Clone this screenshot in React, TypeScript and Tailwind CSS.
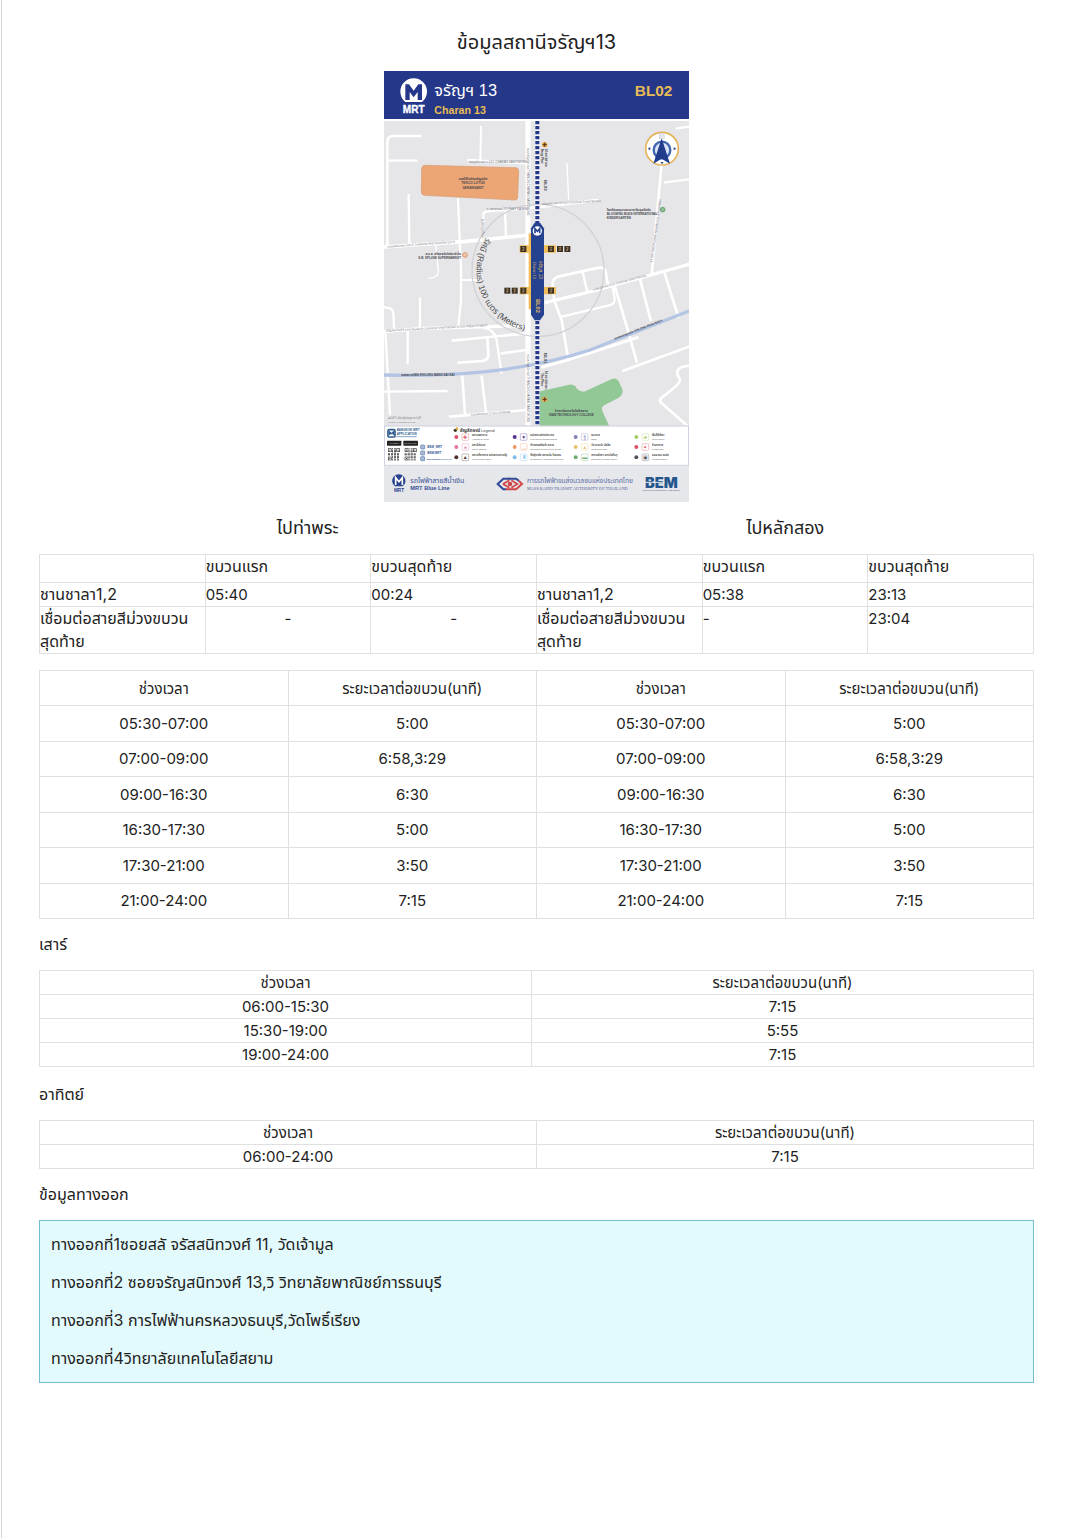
type Row = [string, string];

const weekday: Row[] = [
  ["05:30-07:00", "5:00"],
  ["07:00-09:00", "6:58,3:29"],
  ["09:00-16:30", "6:30"],
  ["16:30-17:30", "5:00"],
  ["17:30-21:00", "3:50"],
  ["21:00-24:00", "7:15"],
];

const saturday: Row[] = [
  ["06:00-15:30", "7:15"],
  ["15:30-19:00", "5:55"],
  ["19:00-24:00", "7:15"],
];

const sunday: Row[] = [["06:00-24:00", "7:15"]];

const exits = [
  "ทางออกที่1ซอยสลั จรัสสนิทวงศ์ 11, วัดเจ้ามูล",
  "ทางออกที่2 ซอยจรัญสนิทวงศ์ 13,วิ วิทยาลัยพาณิชย์การธนบุรี",
  "ทางออกที่3 การไฟฟ้านครหลวงธนบุรี,วัดโพธิ์เรียง",
  "ทางออกที่4วิทยาลัยเทคโนโลยีสยาม",
];

const PERIOD = "ช่วงเวลา";
const INTERVAL = "ระยะเวลาต่อขบวน(นาที)";

const roads: [string, number][] = [
  ["M108 195H28Q10 195 10 214V522", 8],
  ["M10 269H98", 7],
  ["M291 167L289 268", 6],
  ["M253 267L432 278", 7],
  ["M74 372L76 520", 7],
  ["M549 277L554 385", 4],
  ["M833 275L803 612", 8],
  ["M878 172L915 167M843 334L915 325", 7],
  ["M440 410L640 388", 9],
  ["M0 528L238 512L438 492", 11],
  ["M298 507V432Q298 422 308 421L428 412M363 422L366 497", 7],
  ["M222 385L231 600V690L223 765", 7],
  ["M155 522L163 600Q164 620 133 622", 4],
  ["M231 627H293", 6],
  ["M0 709Q26 709 28 725L30 772M108 682V768", 7],
  ["M0 782L118 772L428 764", 10],
  ["M206 809L428 787", 8],
  ["M298 770Q332 775 338 808L352 905", 7],
  ["M4 782L18 1030M71 782V877", 7],
  ["M310 800L313 850Q314 868 294 870L223 875M353 847L428 837", 8],
  ["M0 962L188 960", 7],
  ["M235 917L243 1029M293 917L306 1022", 8],
  ["M198 1037L428 1017", 8],
  ["M486 694L628 660L800 612L915 580", 10],
  ["M510 682L506 640Q505 622 522 617L645 590Q662 588 665 602L672 642", 8],
  ["M596 604L610 662", 7],
  ["M511 690L533 748L553 867", 8],
  ["M533 737L675 703Q694 698 692 684L686 650", 7],
  ["M693 648L738 800L758 872", 8],
  ["M768 624L800 747M841 604L883 738", 8],
  ["M475 888L548 868L760 800", 9],
  ["M718 899L915 827", 8],
  ["M915 884Q876 888 880 908L888 928Q888 940 830 982L828 992L910 1064", 8],
  ["M432 150V1064", 15],
];

const legend: { x: number; y: number; color: string; glyph: string; th: string; en: string }[] = [
  { x: 217, y: 1098, color: "#dd5065", glyph: "✚", th: "สถานพยาบาล", en: "Hospital & Clinic" },
  { x: 217, y: 1128, color: "#e577a6", glyph: "●", th: "สถานีตำรวจ", en: "Police Station" },
  { x: 217, y: 1159, color: "#4b332f", glyph: "▲", th: "สถานที่ราชการ หน่วยงานภาครัฐ", en: "Government Office" },
  { x: 392, y: 1098, color: "#55308c", glyph: "▼", th: "หน่วยงานต่างประเทศ", en: "Foreign/Intl Organizations" },
  { x: 392, y: 1128, color: "#ec9a68", glyph: "◡", th: "ห้างสรรพสินค้า ตลาด", en: "Shopping Center/Food Center" },
  { x: 392, y: 1159, color: "#80bce8", glyph: "♜", th: "ที่อยู่อาศัย สถานบัน โรงแรม", en: "Residential, Condominium/Hotel" },
  { x: 575, y: 1098, color: "#8680bd", glyph: "§", th: "ธนาคาร", en: "Bank" },
  { x: 575, y: 1128, color: "#e6c667", glyph: "▲", th: "วัด ศาลเจ้า มัสยิด", en: "Religious Place" },
  { x: 575, y: 1159, color: "#6cad70", glyph: "▬", th: "สถานศึกษา สถาบันอื่นๆ", en: "Education & Other Sport" },
  { x: 757, y: 1098, color: "#a8cf63", glyph: "♣", th: "พื้นที่สีเขียว", en: "Green Zone" },
  { x: 757, y: 1128, color: "#dd5065", glyph: "✦", th: "ร้านอาหาร", en: "Restaurant" },
  { x: 757, y: 1159, color: "#56565e", glyph: "▣", th: "คมนาคม ขนส่ง", en: "Transportation" },
];

const facilities: [number, number][] = [
  [418, 534], [501, 534], [528, 534], [550, 534],
  [370, 659], [392, 659], [418, 659], [501, 659],
];

function QrCode({ x, y }: { x: number; y: number }) {
  const cells: [number, number][] = [];
  for (let r = 0; r < 12; r++)
    for (let c = 0; c < 12; c++) {
      const corner = (r < 4 && c < 4) || (r < 4 && c > 7) || (r > 7 && c < 4);
      if (!corner && (r * 7 + c * 5 + r * c) % 3 !== 1) cells.push([r, c]);
    }
  return (
    <g transform={`translate(${x} ${y})`} fill="#333">
      {cells.map(([r, c]) => (
        <rect key={`${r}-${c}`} x={c * 3} y={r * 3} width="3" height="3" />
      ))}
      {[[0, 0], [25, 0], [0, 25]].map(([cx, cy]) => (
        <g key={`${cx}-${cy}`}>
          <rect x={cx + 1} y={cy + 1} width="9" height="9" fill="none" stroke="#333" strokeWidth="2" />
          <rect x={cx + 4} y={cy + 4} width="3" height="3" />
        </g>
      ))}
    </g>
  );
}

function StationMap() {
  return (
    <svg
      viewBox="0 0 915 1293"
      className="block w-[305px] max-w-full"
      role="img"
      aria-label="จรัญฯ 13 Charan 13 BL02"
      fontFamily='"Liberation Sans", "Noto Sans Thai", sans-serif'
    >
      <rect width="915" height="1293" fill="#fff" />
      <rect width="915" height="144" fill="#243788" />
      <path d="M64 93A40 40 0 1 1 114 93Z" fill="#fff" />
      <path d="M64 87V40H75L89 59L103 40H114V87H101V63L89 79L77 63V87Z" fill="#243788" />
      <text x="89" y="126" fontSize="30" fontWeight="700" fill="#fff" stroke="#fff" strokeWidth="1" textAnchor="middle">MRT</text>
      <text x="151" y="75" fontSize="49" fill="#fff">จรัญฯ 13</text>
      <text x="151" y="128" fontSize="32" fontWeight="700" fill="#e9bb55">Charan 13</text>
      <text x="865" y="76" fontSize="46" fontWeight="700" fill="#e9bb55" textAnchor="end">BL02</text>

      <rect y="150" width="915" height="914" fill="#e6e6e8" />
      <clipPath id="map-area">
        <rect y="150" width="915" height="914" />
      </clipPath>
      <g clipPath="url(#map-area)">
        <g fill="none" stroke="#fff" strokeLinejoin="round" strokeLinecap="round">
          {roads.map(([d, w]) => (
            <path key={d} d={d} strokeWidth={w} />
          ))}
        </g>
        <path d="M0 912C190 916 400 908 618 837L915 720" fill="none" stroke="#b4c5e4" strokeWidth="10" />
        <path d="M124 283L396 290Q404 291 404 300L401 380Q400 388 392 387L122 373Q112 372 112 362L113 293Q114 283 124 283Z" fill="#eca676" stroke="#d99a70" strokeWidth="2" />
        <path d="M463 962L552 942Q566 938 574 946Q582 962 600 962L682 925Q696 918 704 930L716 958Q716 974 704 980L658 1004Q650 1012 656 1022L676 1066H463Z" fill="#92c796" />
        <circle cx="462" cy="598" r="198" fill="none" stroke="#d2d2d6" strokeWidth="4" />
        <path d="M460 150V1064" stroke="#f4f5fa" strokeWidth="14" />
        <path d="M460 150V1064" stroke="#243788" strokeWidth="12" strokeDasharray="10 5" />

        <rect x="434" y="487" width="20" height="228" fill="#f0bd58" />
        <path d="M407 523H516V545H407ZM407 648H516V670H407Z" fill="#f0bd58" />
        <path d="M452 455H468L480 472V731L468 748H452L441 731V472Z" fill="#24428f" />
        <circle cx="460" cy="480" r="14" fill="#fff" />
        <path d="M453 487V473L460 481L467 473V487" fill="none" stroke="#24428f" strokeWidth="5" />
        {facilities.map(([x, y]) => (
          <g key={`${x}-${y}`}>
            <rect x={x - 9} y={y - 9} width="18" height="18" fill="#3b3024" />
            <path d={`M${x - 4} ${y - 5}H${x + 4}M${x} ${y - 5}V${y + 6}M${x - 4} ${y + 5}L${x + 4} ${y}`} stroke="#b99a68" strokeWidth="2" />
          </g>
        ))}
        <g fill="#e4bc62">
          <text transform="translate(464 570) rotate(90)" fontSize="14">จรัญฯ 13</text>
          <text transform="translate(448 572) rotate(90)" fontSize="11">Charan 13</text>
          <text transform="translate(455 684) rotate(90)" fontSize="17" fontWeight="700">BL02</text>
        </g>

        <path id="radius-arc" d="M306 500A184 184 0 0 0 450 782" fill="none" />
        <text fontSize="25" fill="#4a4a4a">
          <textPath href="#radius-arc">รัศมี (Radius) 100 เมตร (Meters)</textPath>
        </text>

        <g fill="#4a4a52">
          <g fontSize="10" fontWeight="700" textAnchor="middle">
            <text x="267" y="326">เทสโก้โลตัสจรัญสนิท</text>
            <text x="267" y="339">TESCO LOTUS</text>
            <text x="267" y="353">JARANSANIT</text>
            <text x="562" y="1022">วิทยาลัยเทคโนโลยีสยาม</text>
            <text x="562" y="1036" fontSize="9">SIAM TECHNOLOGY COLLEGE</text>
          </g>
          <g fontSize="9" fontWeight="700">
            <text x="668" y="420">โรงเรียนอนุบาลนานาชาติบลูมมิ่งบัด</text>
            <text x="668" y="431">BLOOMING BUDS INTERNATIONAL</text>
            <text x="668" y="443">KINDERGARTEN</text>
            <text x="231" y="552" textAnchor="end">ส.บ.ส. ศรีสุขซุปเปอร์มาร์เก็ต</text>
            <text x="231" y="563" textAnchor="end">S.B. SPLUSE SUPERMARKET</text>
            <text x="52" y="914">คลองบางไส้ไก่ KHLONG BANG SAI KAI</text>
            <text transform="translate(692 806) rotate(-21)">คลองมอญเหนือ KHLONG MON NUEA</text>
          </g>
          <g fontSize="9" fill="#777780">
            <text x="255" y="275">จรัญสนิทวงศ์ ซ.10/1 CHARAN SANITWONG</text>
            <text x="308" y="418">ซ. เพชรเกษม 2/1 PHET KASEM</text>
            <text transform="translate(474 402) rotate(-3)">จรัญสนิทวงศ์ 13 SOI CHARAN SANITWONG</text>
            <text transform="translate(10 530) rotate(-4)">ถนนเพชรเกษม ซอย 5 THANON PHETKASEM SOI 5</text>
            <text transform="translate(628 659) rotate(-15)">จรัญสนิทวงศ์ ซ.11 CHARAN SANITWONG</text>
            <text transform="translate(5 782) rotate(-3)">จรัญสนิทวงศ์ 8 ซอยเปรมสมบัติ CHARAN SANITWONG 8 SOI PREM SOMBAT</text>
            <text transform="translate(260 1034) rotate(-4)">ถนนเพชรเกษม 2 SOI CHARAN</text>
            <text transform="translate(429 230) rotate(90)">ถนนจรัญสนิทวงศ์ THANON CHARAN SANITWONG</text>
            <text transform="translate(429 850) rotate(90)">ถนนจรัญสนิทวงศ์ THANON CHARAN SANITWONG</text>
            <text transform="translate(826 385) rotate(98)">จรัญสนิทวงศ์ 13 CHARAN SANITWONG SOI 13</text>
            <text transform="translate(301 500) rotate(-90)">จรัญสนิทวงศ์ 8</text>
            <text x="12" y="1045" fontSize="8">ฉบับที่ 1 ปรับปรุงข้อมูล ณ วันที่</text>
            <text x="12" y="1055" fontSize="7">Version 1 Updated on Map</text>
          </g>
          <g fontSize="9" fontWeight="700">
            <text transform="translate(483 233) rotate(90)">ไป สถานีท่าพระ</text>
            <text transform="translate(471 233) rotate(90)">Bang Phai</text>
            <text transform="translate(479 327) rotate(90)" fontSize="13">BL03</text>
            <text transform="translate(479 846) rotate(90)" fontSize="13">BL01</text>
            <text transform="translate(484 900) rotate(90)">ไป สถานีท่าพระ</text>
            <text transform="translate(472 906) rotate(90)">Tha Phra</text>
          </g>
        </g>
        {[221, 985].map((y) => (
          <g key={y}>
            <circle cx="482" cy={y} r="8" fill="#e6a13f" />
            <path d={`M476 ${y}H488M482 ${y - 6}V${y + 6}`} stroke="#4b3422" strokeWidth="3" />
          </g>
        ))}
        <g strokeWidth="3">
          <circle cx="836" cy="416" r="7" fill="#8abc91" stroke="#6da577" />
          <circle cx="243" cy="552" r="7" fill="#f2c4ad" stroke="#df936b" />
        </g>

        <circle cx="834" cy="233" r="49" fill="#fff" stroke="#e4b358" strokeWidth="5" />
        <circle cx="834" cy="237" r="25" fill="#dbe4f5" stroke="#3f66ae" strokeWidth="7" />
        <path d="M833 202L858 278L833 263L808 278Z" fill="#213c8b" />
        <path d="M791 233L799 228V238ZM877 233L869 228V238ZM834 280L829 273H839Z" fill="#344d8c" />
        <rect x="825" y="186" width="17" height="18" fill="#d8d8dc" />
        <text x="834" y="200" fontSize="15" fill="#fff" textAnchor="middle">N</text>
      </g>

      <rect x="1" y="1065" width="913" height="118" fill="#fff" stroke="#c9c9dc" strokeWidth="3" />
      <rect x="12" y="1076" width="21" height="22" rx="4" fill="#fff" stroke="#2d5b8c" strokeWidth="5" />
      <path d="M17 1092V1083L22 1088L28 1083V1092" fill="none" stroke="#2d5b8c" strokeWidth="4" />
      <text x="38" y="1081" fontSize="9" fontWeight="700" fill="#2d5b8c">BANGKOK MRT</text>
      <text x="38" y="1092" fontSize="9" fontWeight="700" fill="#2d5b8c">APPLICATION</text>
      <path d="M37 1097H98" stroke="#80a7ca" strokeWidth="3" />
      <rect x="9" y="1109" width="43" height="15" rx="2" fill="#222" />
      <rect x="58" y="1109" width="44" height="15" rx="2" fill="#222" />
      <text x="30" y="1119" fontSize="7" fill="#ccc" textAnchor="middle">App Store</text>
      <text x="80" y="1119" fontSize="7" fill="#ccc" textAnchor="middle">Google Play</text>
      <QrCode x={12} y={1132} />
      <QrCode x={62} y={1132} />
      {[1122, 1140, 1157].map((y) => (
        <rect key={y} x="110" y={y} width="12" height="12" rx="2" fill="#a9bcd8" stroke="#5a7aaa" strokeWidth="2" />
      ))}
      <g fontSize="9" fontWeight="700" fill="#335798">
        <text x="130" y="1131">BEM_MRT</text>
        <text x="130" y="1149">BEM.MRT</text>
        <text x="128" y="1166" fontSize="7">WWW.BEMPLC.CO.TH</text>
      </g>
      <circle cx="214" cy="1078" r="5" fill="#40362b" />
      <circle cx="219" cy="1073" r="4" fill="#e0ad3c" />
      <text x="227" y="1082" fontSize="14" fill="#444">
        <tspan fontWeight="700">สัญลักษณ์</tspan>
        <tspan dx="3" fontSize="12">Legend</tspan>
      </text>
      {legend.map(({ x, y, color, glyph, th, en }) => (
        <g key={`${x}-${y}`}>
          <circle cx={x} cy={y} r="6" fill={color} />
          <rect x={x + 17} y={y - 10} width="20" height="20" rx="3" fill="#fff" stroke={color} strokeWidth="1" />
          <text x={x + 27} y={y + 5} fontSize="15" fill={color} textAnchor="middle">{glyph}</text>
          <text x={x + 47} y={y - 3} fontSize="8" fontWeight="700" fill="#555">{th}</text>
          <text x={x + 47} y={y + 8} fontSize="7" fill="#555">{en}</text>
        </g>
      ))}

      <rect y="1184" width="915" height="109" fill="#e5e7eb" />
      <path d="M33 1246A20 20 0 1 1 56 1246Z" fill="#294290" />
      <path d="M35 1242V1220L45 1232L55 1220V1242" fill="none" stroke="#fff" strokeWidth="5" />
      <text x="45" y="1262" fontSize="14" fontWeight="700" fill="#294290" textAnchor="middle">MRT</text>
      <text x="79" y="1236" fontSize="21" fill="#3b5196">รถไฟฟ้าสายสีน้ำเงิน</text>
      <text x="79" y="1258" fontSize="17" fontWeight="700" fill="#3b5196">MRT Blue Line</text>
      <g fill="none" strokeWidth="6">
        <path d="M376 1223H358L341 1239L358 1255H366" stroke="#304997" />
        <path d="M366 1255H396L414 1239L404 1229" stroke="#cf4548" />
        <path d="M372 1223H396L404 1229" stroke="#304997" />
        <path d="M357 1239L376 1228M357 1239L376 1250" stroke="#cf4548" strokeWidth="5" />
        <path d="M382 1228L400 1239L382 1250" stroke="#cf4548" strokeWidth="5" />
      </g>
      <circle cx="378" cy="1239" r="7" fill="#cf4548" />
      <text x="429" y="1235" fontSize="20" fill="#5b6ba3">การรถไฟฟ้าขนส่งมวลชนแห่งประเทศไทย</text>
      <text x="429" y="1258" fontSize="13" fill="#506199" fontFamily='"Liberation Serif", serif'>MASS RAPID TRANSIT AUTHORITY OF THAILAND</text>
      <text x="832" y="1250" fontSize="44" fontWeight="900" fill="#24558d" textAnchor="middle" fontFamily="Inter, sans-serif">BEM</text>
      <path d="M773 1234H842" stroke="#e5e7eb" strokeWidth="3" />
      <text x="832" y="1260" fontSize="6" fontWeight="700" fill="#647b9b" textAnchor="middle">BANGKOK EXPRESSWAY AND METRO</text>
    </svg>
  );
}

function Intervals({ rows, split, firstCol }: { rows: Row[]; split?: boolean; firstCol: string }) {
  const cell = `${split ? "h-[35px]" : "h-6"} border border-[#e0e0e0] p-0 text-center font-normal`;
  const halves = split ? [0, 1] : [0];
  return (
    <table className={`w-full table-fixed border-collapse ${split ? "h-[249px]" : ""}`}>
      <thead>
        <tr>
          {halves.map((h) => [
            <th key={`p${h}`} scope="col" className={`${cell} ${firstCol}`}>{PERIOD}</th>,
            <th key={`i${h}`} scope="col" className={cell}>{INTERVAL}</th>,
          ])}
        </tr>
      </thead>
      <tbody>
        {rows.map(([time, gap]) => (
          <tr key={time}>
            {halves.map((h) => [
              <td key={`p${h}`} className={cell}>{time}</td>,
              <td key={`i${h}`} className={cell}>{gap}</td>,
            ])}
          </tr>
        ))}
      </tbody>
    </table>
  );
}

export default function App() {
  const cell = "border border-[#e0e0e0] p-0 text-left align-top font-normal";
  const head = `${cell} text-base leading-[23px]`;
  return (
    <main className="ml-px min-h-screen border-l border-[#d6d6d6] bg-white pr-8 pl-[37px] font-['Inter','Noto_Sans_Thai','Kanit',sans-serif] text-[15px] leading-[23px] text-[#222]">
      <h1 className="pt-7 text-center text-xl leading-7">ข้อมูลสถานีจรัญฯ13</h1>
      <div className="mt-[15px] flex justify-center">
        <StationMap />
      </div>

      <div className="mt-3 grid grid-cols-2 text-center text-lg leading-7">
        <h2 className="pl-10">ไปท่าพระ</h2>
        <h2>ไปหลักสอง</h2>
      </div>

      <table className="mt-3 w-full table-fixed border-collapse">
        <thead>
          <tr className="h-7">
            <td className={cell}></td>
            <th scope="col" className={head}>ขบวนแรก</th>
            <th scope="col" className={head}>ขบวนสุดท้าย</th>
            <td className={cell}></td>
            <th scope="col" className={head}>ขบวนแรก</th>
            <th scope="col" className={head}>ขบวนสุดท้าย</th>
          </tr>
        </thead>
        <tbody>
          <tr>
            <th scope="row" className={head}>ชานชาลา1,2</th>
            <td className={cell}>05:40</td>
            <td className={cell}>00:24</td>
            <th scope="row" className={head}>ชานชาลา1,2</th>
            <td className={cell}>05:38</td>
            <td className={cell}>23:13</td>
          </tr>
          <tr>
            <th scope="row" className={head}>เชื่อมต่อสายสีม่วงขบวนสุดท้าย</th>
            <td className={cell}><div className="text-center">-</div></td>
            <td className={cell}><div className="text-center">-</div></td>
            <th scope="row" className={head}>เชื่อมต่อสายสีม่วงขบวนสุดท้าย</th>
            <td className={cell}>-</td>
            <td className={cell}>23:04</td>
          </tr>
        </tbody>
      </table>

      <div className="mt-4">
        <Intervals rows={weekday} split firstCol="w-1/4" />
      </div>

      <h2 className="mt-[14px] mb-[14px] text-base leading-[23px]">เสาร์</h2>
      <Intervals rows={saturday} firstCol="w-[492px]" />

      <h2 className="mt-4 mb-[14px] text-base leading-[23px]">อาทิตย์</h2>
      <Intervals rows={sunday} firstCol="w-1/2" />

      <h2 className="mt-[14px] mb-[14px] text-base leading-[23px]">ข้อมูลทางออก</h2>
      <ul className="flex flex-col gap-[15px] border border-[#74bfcf] bg-[#e3fafc] px-[11px] py-3 text-base leading-[23px]">
        {exits.map((exit) => (
          <li key={exit}>{exit}</li>
        ))}
      </ul>
    </main>
  );
}
